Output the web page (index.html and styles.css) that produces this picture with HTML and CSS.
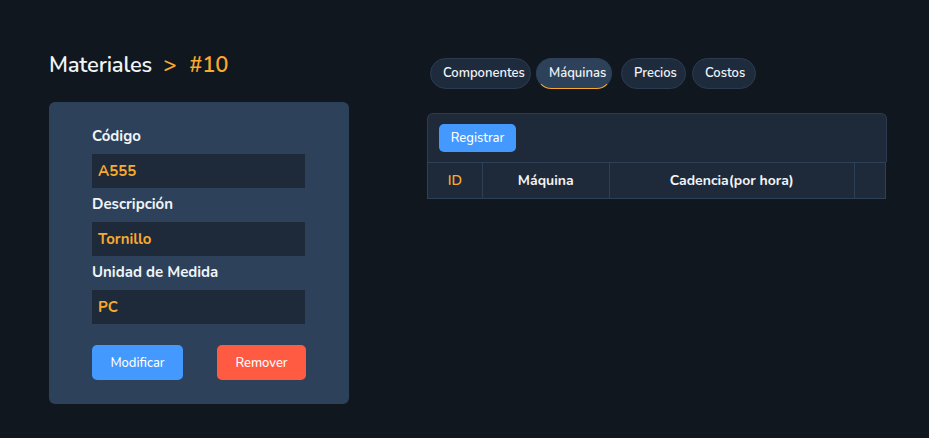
FILE: index.html
```html
<!DOCTYPE html>
<html lang="es">
<head>
<meta charset="utf-8">
<link rel="stylesheet" href="styles.css">
</head>
<body>
<div class="page">
  <section class="left">
    <h1 class="title">Materiales <span class="sep">&gt;</span> <span class="num">#10</span></h1>
    <div class="card">
      <label class="lbl">Código</label>
      <div class="field">A555</div>
      <label class="lbl">Descripción</label>
      <div class="field">Tornillo</div>
      <label class="lbl">Unidad de Medida</label>
      <div class="field">PC</div>
      <div class="actions">
        <button class="btn blue mod">Modificar</button>
        <button class="btn red rem">Remover</button>
      </div>
    </div>
  </section>
  <section class="right">
    <nav class="tabs">
      <span class="tab t1">Componentes</span>
      <span class="tab t2 active">Máquinas</span>
      <span class="tab t3">Precios</span>
      <span class="tab t4">Costos</span>
    </nav>
    <div class="panel">
      <div class="toolbar"><button class="btn blue reg">Registrar</button></div>
      <div class="thead">
        <div class="th c1 id">ID</div>
        <div class="th c2">Máquina</div>
        <div class="th c3">Cadencia(por hora)</div>
        <div class="th c4"></div>
      </div>
    </div>
  </section>
</div>
</body>
</html>
```
FILE: styles.css
```css
* { box-sizing: border-box; }
html, body { margin: 0; padding: 0; background: #10171f; height: 100%; }
body { font-family: "Nunito", "Lato", "Noto Sans", sans-serif; color: #f1f4f8; }
.page { display: flex; padding-left: 49px; }
.left { width: 300px; padding-top: 50px; }
.title { margin: 0; font-size: 22px; font-weight: 600; line-height: 30px; height: 52px; letter-spacing: -0.2px; }
.sep, .num { color: #f8a92e; }
.sep { margin: 0 7px 0 6px; }
.card { background: #2d425a; border-radius: 6px; padding: 24px 43px 24px 43px; height: 302px; }
.lbl { display: block; font-size: 15px; font-weight: 700; line-height: 20px; margin-bottom: 8px; }
.field { background: #1e2939; height: 34px; line-height: 34px; padding-left: 6px; color: #f8a92e; font-size: 15px; font-weight: 700; margin-bottom: 6px; width: 213px; }
.actions { display: flex; justify-content: space-between; width: 214px; margin-top: 21px; }
.btn { border: none; border-radius: 5px; color: #fff; font-family: inherit; font-size: 13px; font-weight: 500; cursor: pointer; padding: 0; }
.blue { background: #4399fe; }
.red { background: #ff5b42; }
.mod { width: 91px; height: 35px; }
.rem { width: 89px; height: 35px; }
.right { margin-left: 78px; padding-top: 58px; width: 460px; }
.tabs { display: flex; gap: 5px; height: 55px; padding-left: 3px; }
.tab { height: 31px; line-height: 29px; border-radius: 16px; background: #1e2b3c; border: 1px solid #2b3b50; font-size: 13px; font-weight: 600; padding: 0 12px; }
.t1 { width: 101px; }
.t2 { width: 76px; background: #2d425a; border-color: #2d425a; border-bottom: 1.5px solid #f8a92e; margin-right: 4px; }
.t3 { width: 65px; }
.t4 { width: 64px; margin-left: 1px; }
.panel { width: 460px; }
.toolbar { background: #1e2939; border: 1px solid #2c3b4f; border-bottom: none; border-radius: 6px 6px 0 0; height: 49px; padding: 10px 11px; }
.reg { width: 77px; height: 28px; }
.thead { display: flex; width: 459px; height: 37px; background: #1e2939; border: 1px solid #2c4058; border-right: none; }
.th { height: 100%; line-height: 35px; text-align: center; font-size: 14px; font-weight: 700; border-right: 1.5px solid #2c4058; }
.c1 { width: 55px; }
.c2 { width: 127px; }
.c3 { width: 246px; }
.c4 { width: 31px; }
.id { color: #f8a92e; font-weight: 600; }
```
